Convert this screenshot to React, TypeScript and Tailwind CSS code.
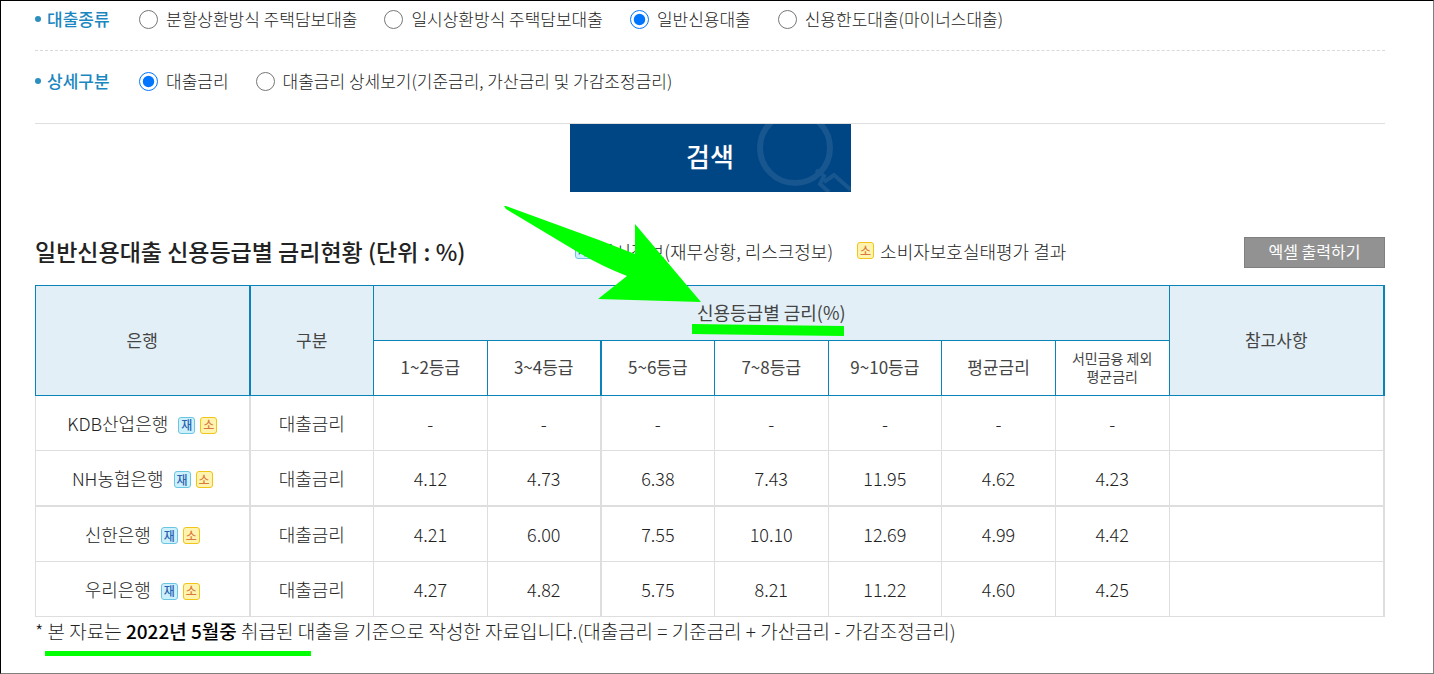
import { useState } from "react";

const loanTypes = [
  "분할상환방식 주택담보대출",
  "일시상환방식 주택담보대출",
  "일반신용대출",
  "신용한도대출(마이너스대출)",
];

const detailTypes = [
  "대출금리",
  "대출금리 상세보기(기준금리, 가산금리 및 가감조정금리)",
];

const grades = ["1~2등급", "3~4등급", "5~6등급", "7~8등급", "9~10등급", "평균금리"];

const banks = [
  { name: "KDB산업은행", rates: ["-", "-", "-", "-", "-", "-", "-"] },
  { name: "NH농협은행", rates: ["4.12", "4.73", "6.38", "7.43", "11.95", "4.62", "4.23"] },
  { name: "신한은행", rates: ["4.21", "6.00", "7.55", "10.10", "12.69", "4.99", "4.42"] },
  { name: "우리은행", rates: ["4.27", "4.82", "5.75", "8.21", "11.22", "4.60", "4.25"] },
];

function FinanceBadge() {
  return (
    <span className="inline-flex h-[17px] w-[17px] shrink-0 items-center justify-center rounded-[3px] border border-[#6cc5e0] bg-[#cdf1fc] text-xs leading-none font-medium text-[#2a62b0]">
      재
    </span>
  );
}

function ConsumerBadge() {
  return (
    <span className="inline-flex h-[17px] w-[17px] shrink-0 items-center justify-center rounded-[3px] border border-[#f0c419] bg-[#fff3b0] text-xs leading-none font-medium text-[#d9793a]">
      소
    </span>
  );
}

interface OptionRowProps {
  title: string;
  name: string;
  options: string[];
  value: string;
  onChange: (value: string) => void;
}

function OptionRow({ title, name, options, value, onChange }: OptionRowProps) {
  return (
    <fieldset className="flex items-center">
      <legend className="float-left flex w-[104px] items-center gap-[6px] text-[17px] leading-6 font-medium text-[#1b87c0]">
        <span className="h-[6px] w-[6px] rounded-full bg-[#2b8fc0]" />
        {title}
      </legend>
      <div className="flex items-center gap-[27px]">
        {options.map((option) => (
          <label key={option} className="flex items-center gap-2 text-[17px] leading-6">
            <input
              type="radio"
              name={name}
              checked={value === option}
              onChange={() => onChange(option)}
              className="h-[19px] w-[19px] accent-[#0075ff]"
            />
            {option}
          </label>
        ))}
      </div>
    </fieldset>
  );
}

export default function App() {
  const [loanType, setLoanType] = useState(loanTypes[2]);
  const [detailType, setDetailType] = useState(detailTypes[0]);

  return (
    <div className="min-h-screen border border-t-black border-r-[#7f7f7f] border-b-[#7f7f7f] border-l-black bg-white pr-12 pl-[34px] font-['Noto_Sans_CJK_KR',sans-serif] font-light text-[#222]">
      {/* 검색 조건 */}
      <div className="border-b border-dashed border-[#d9d9d9] pt-[6px] pb-[19px]">
        <OptionRow title="대출종류" name="loan" options={loanTypes} value={loanType} onChange={setLoanType} />
      </div>
      <div className="border-b border-[#dfdfdf] pt-[18px] pb-[30px]">
        <OptionRow title="상세구분" name="detail" options={detailTypes} value={detailType} onChange={setDetailType} />
      </div>

      <button
        type="button"
        className="relative mx-auto block h-[68px] w-[281px] overflow-hidden bg-[#004684] pb-1 text-[26px] leading-none font-medium text-white"
      >
        검색
        <svg className="absolute inset-0 h-full w-full" viewBox="0 0 281 68" fill="none" stroke="#17568f">
          <circle cx="225" cy="24" r="35" strokeWidth="6" />
          <path d="M246 46l8 6-4 8 9 8M254 58l10-7 17 15" strokeWidth="4" />
        </svg>
      </button>

      {/* 표 제목 */}
      <div className="flex items-center justify-between pt-[44px] pb-[17px]">
        <h2 className="w-[540px] pb-[2px] text-[23px] leading-[30px] font-medium">
          일반신용대출 신용등급별 금리현황 (단위 : %)
        </h2>
        <div className="flex flex-1 items-center gap-6 pb-[3px] text-[18px] leading-7">
          <span className="flex items-center gap-[6px]">
            <FinanceBadge />
            공시정보(재무상황, 리스크정보)
          </span>
          <span className="flex items-center gap-[6px]">
            <ConsumerBadge />
            소비자보호실태평가 결과
          </span>
        </div>
        <button
          type="button"
          className="h-[31px] w-[141px] border border-[#7f7f7f] bg-[#929292] pb-[2px] text-base leading-none font-normal text-white"
        >
          엑셀 출력하기
        </button>
      </div>

      {/* 금리 표 */}
      <table className="w-full table-fixed border-collapse text-center">
        <colgroup>
          <col className="w-[214px]" />
          <col className="w-[124px]" />
          <col span={7} />
          <col className="w-[215px]" />
        </colgroup>
        <thead className="text-[17px] leading-6 text-[#444] [&_th]:border [&_th]:border-[#0a84b8] [&_th]:pb-[2px] [&_th]:font-normal">
          <tr className="h-[55px] bg-[#e2eff6]">
            <th scope="col" rowSpan={2} className="border-r-2!">은행</th>
            <th scope="col" rowSpan={2}>구분</th>
            <th scope="colgroup" colSpan={7} className="text-[18px]">
              <span className="relative inline-block">
                신용등급별 금리(%)
                {/* 강조 표시: 밑줄과 화살표 */}
                <svg className="absolute top-full -left-[5px] h-3 w-[152px]" viewBox="0 0 152 12" fill="#0f0">
                  <path d="M0 0L152 2V12L0 10Z" />
                </svg>
                <svg className="absolute -top-[95px] -left-[193px] h-[98px] w-[197px]" viewBox="0 0 197 98" fill="#0f0">
                  <path d="M0 1L2 1L95 35L131 49V19L197 97L94 94L123 71Q97 61 72 46L2 4Z" />
                </svg>
              </span>
            </th>
            <th scope="col" rowSpan={2} className="border-r-2!">참고사항</th>
          </tr>
          <tr className="h-[55px] bg-white">
            {grades.map((grade) => (
              <th key={grade} scope="col" className="nth-2:border-r-2!">{grade}</th>
            ))}
            <th scope="col" className="text-sm leading-[18px]">
              서민금융 제외
              <br />
              평균금리
            </th>
          </tr>
        </thead>
        <tbody className="text-[18px] leading-6 [&_td]:border [&_td]:border-[#dedede] [&_th]:border [&_th]:border-[#dedede]">
          {banks.map((bank) => (
            <tr key={bank.name} className="h-[55px] nth-2:[&>*]:border-b-2! nth-3:h-14">
              <th scope="row" className="border-r-2! font-light">
                <span className="flex items-center justify-center gap-[10px]">
                  {bank.name}
                  <span className="flex gap-[5px] pt-1">
                    <FinanceBadge />
                    <ConsumerBadge />
                  </span>
                </span>
              </th>
              <td>대출금리</td>
              {bank.rates.map((rate, i) => (
                <td key={i} className="nth-4:border-r-2!">{rate}</td>
              ))}
              <td className="border-r-2!" />
            </tr>
          ))}
        </tbody>
      </table>

      <p className="text-[19px] leading-7">
        * 본 자료는 <b className="font-medium text-black">2022년 5월중</b> 취급된 대출을 기준으로 작성한
        자료입니다.(대출금리 = 기준금리 + 가산금리 - 가감조정금리)
      </p>
      <div className="mt-[6px] ml-[10px] h-[5px] w-[266px] bg-[#0f0]" />
    </div>
  );
}
